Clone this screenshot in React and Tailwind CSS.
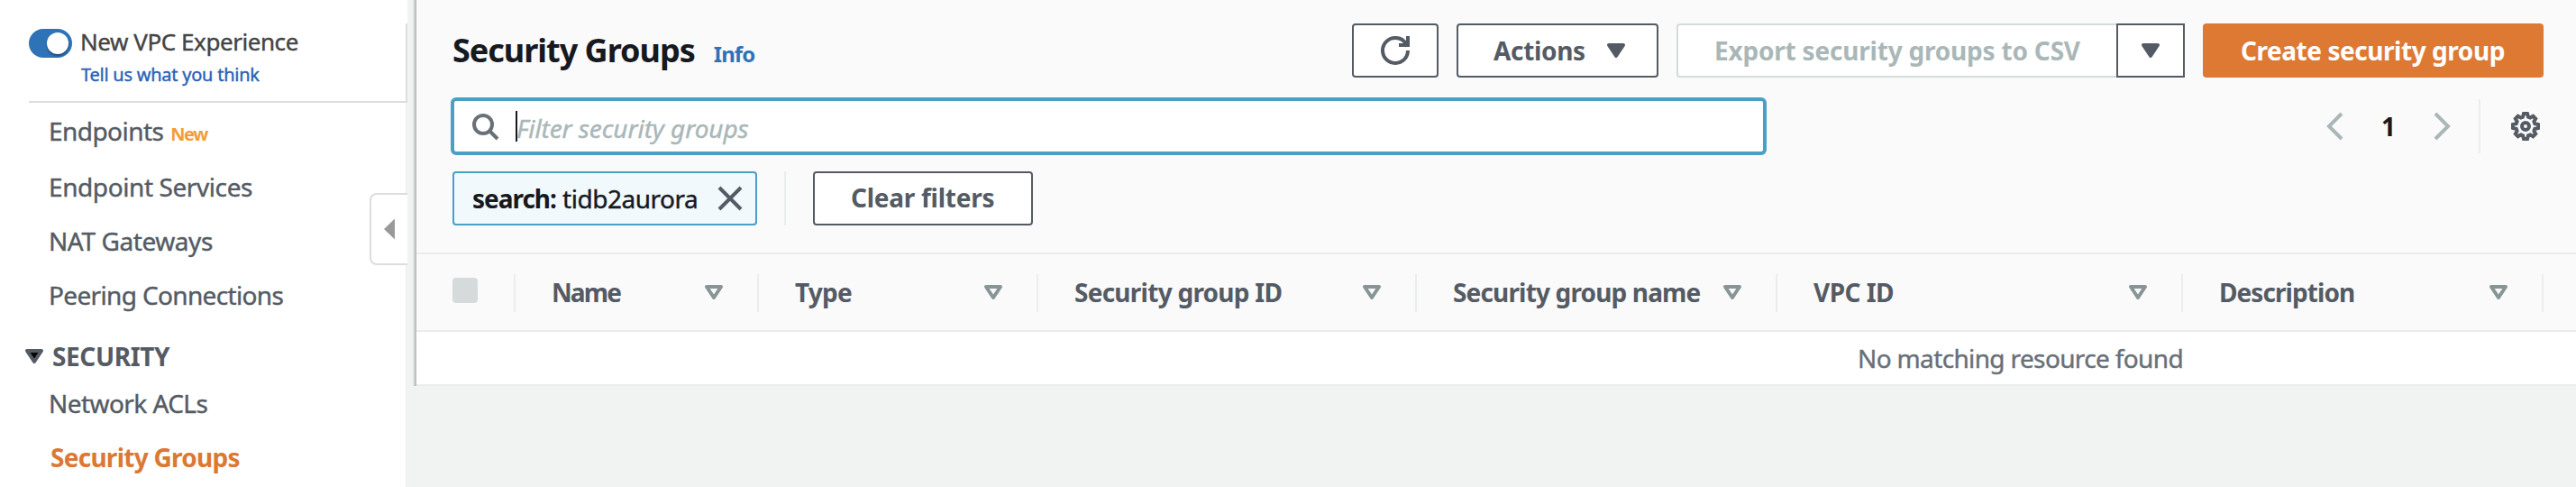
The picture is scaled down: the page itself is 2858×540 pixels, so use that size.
import React from "react";

function Icon({ children, className = "" }) {
  return (
    <svg viewBox="0 0 16 16" width="32" height="32" fill="none" stroke="currentColor" strokeWidth="2" className={"block shrink-0 " + className}>
      {children}
    </svg>
  );
}

function Caret({ className = "", fill = "currentColor" }) {
  return (
    <Icon className={className}>
      <path d="M4 5h8l-4 6-4-6z" fill={fill} strokeLinejoin="round" />
    </Icon>
  );
}

const navItems = [
  { label: "Endpoint Services", spacing: "tracking-[-0.41px]" },
  { label: "NAT Gateways", spacing: "tracking-[-0.41px]" },
  { label: "Peering Connections", spacing: "tracking-[-0.65px]" },
];

const columns = [
  { label: "Name", width: "w-[270px]", spacing: "tracking-[-1.9px]" },
  { label: "Type", width: "w-[310px]", spacing: "tracking-[-0.76px]" },
  { label: "Security group ID", width: "w-[420px]", spacing: "tracking-[-0.74px]" },
  { label: "Security group name", width: "w-[400px]", spacing: "tracking-[-0.84px]" },
  { label: "VPC ID", width: "w-[450px]", spacing: "tracking-[-0.55px]" },
  { label: "Description", width: "w-[400px]", spacing: "tracking-[-0.93px]" },
];

function Sidebar() {
  return (
    <aside className="relative h-[540px] w-[452px] shrink-0 bg-white text-[28px] text-[#545b64]">
      <div className="flex h-[114px] flex-col">
        <div className="h-[26px] shrink-0" />
        <div className="flex h-[88px] border-r-2 border-[#dddddd]">
          <div className="ml-8 flex flex-1 gap-[9px] border-b-2 border-[#dddddd] pt-[6px]">
            <div className="flex h-8 w-12 shrink-0 items-center justify-end rounded-full bg-[#2e73b8] pr-1">
              <span className="size-6 rounded-full bg-white shadow-[0_2px_2px_rgba(0,0,0,0.35)]" />
            </div>
            <div className="flex flex-col whitespace-nowrap [-webkit-text-stroke:0.4px]">
              <span className="h-8 text-[26px] leading-[28px] tracking-[-0.44px] text-[#444444]">New VPC Experience</span>
              <span className="pl-[1px] pt-[5px] text-[20px] leading-[28px] tracking-[-0.24px] text-[#2a62b8]">Tell us what you think</span>
            </div>
          </div>
        </div>
      </div>
      <nav className="flex h-[426px] flex-col whitespace-nowrap border-r-2 border-[#f0f0f0] pl-[54px]">
        <div className="flex h-[63px] items-baseline gap-[8px] leading-[63px]">
          <span className="tracking-[-0.55px] [-webkit-text-stroke:0.4px]">Endpoints</span>
          <span className="text-[20px] font-bold tracking-[-1.5px] text-[#f29d38]">New</span>
        </div>
        {navItems.map((item) => (
          <span key={item.label} className={"h-[60px] leading-[60px] [-webkit-text-stroke:0.4px] " + item.spacing}>{item.label}</span>
        ))}
        <div className="-ml-8 mt-4 flex h-11 items-center gap-1 font-bold leading-[44px] tracking-[-0.38px]">
          <Caret fill="#000" />
          <span>SECURITY</span>
        </div>
        <span className="h-[60px] leading-[60px] tracking-[-0.56px] [-webkit-text-stroke:0.4px]">Network ACLs</span>
        <span className="h-[60px] pl-[2px] font-bold leading-[60px] tracking-[-0.73px] text-[#dc7833]">Security Groups</span>
      </nav>
      <div className="absolute right-0 top-[214px] flex h-[80px] w-[42px] items-center rounded-l-[8px] border-2 border-r-0 border-[#dddddd] bg-white pl-[14px]">
        <svg width="12" height="24" viewBox="0 0 12 24" className="block">
          <path d="M12 0.5v23L0 12z" fill="#999999" />
        </svg>
      </div>
    </aside>
  );
}

function Toolbar() {
  return (
    <div className="flex h-[60px] items-center justify-between">
      <div className="flex items-baseline gap-[21px] whitespace-nowrap pt-[3px]">
        <h1 className="text-[36px] font-bold leading-[60px] tracking-[-1.01px]">Security Groups</h1>
        <a className="text-[24px] font-bold leading-[60px] tracking-[-0.9px] text-[#2e73b8]">Info</a>
      </div>
      <div className="flex gap-5 whitespace-nowrap text-[28px] font-bold text-[#545b64]">
        <button className="flex h-[60px] w-24 items-center justify-center rounded-[4px] border-2 border-[#545b64] bg-white">
          <Icon>
            <path d="M10 5h5V0" />
            <path d="M15 8a6.957 6.957 0 0 1-7 7 6.957 6.957 0 0 1-7-7 6.957 6.957 0 0 1 7-7 6.87 6.87 0 0 1 6.3 4" />
          </Icon>
        </button>
        <button className="flex h-[60px] w-56 items-center gap-[18px] rounded-[4px] border-2 border-[#545b64] bg-white pl-[39px]">
          <span className="leading-[54px] tracking-[-0.34px]">Actions</span>
          <Caret />
        </button>
        <div className="flex">
          <button className="flex h-[60px] w-[488px] items-center rounded-l-[4px] border-2 border-r-0 border-[#d5dbdb] bg-white pl-[40px] text-[#aab7b8]">
            <span className="leading-[54px] tracking-[-0.2px]">Export security groups to CSV</span>
          </button>
          <button className="flex h-[60px] w-[76px] items-center justify-center border-2 border-[#545b64] bg-white">
            <Caret />
          </button>
        </div>
        <button className="flex h-[60px] w-[378px] items-center rounded-[4px] bg-[#dd7933] pl-[42px] text-white">
          <span className="leading-[58px] tracking-[-0.45px]">Create security group</span>
        </button>
      </div>
    </div>
  );
}

function FilterRow() {
  return (
    <div className="mt-[22px] flex h-16 items-center justify-between">
      <div className="-ml-[2px] flex h-16 w-[1460px] items-center rounded-[6px] border-4 border-[#4a9fc7] bg-white pl-[18px]">
        <Icon className="text-[#687078]">
          <circle cx="7" cy="7" r="5" />
          <path d="m15 15-4.5-4.5" />
        </Icon>
        <span className="ml-[18px] h-[34px] w-[2px] bg-[#16191f]" />
        <span className="-ml-[1px] pt-[3px] text-[28px] italic leading-[54px] tracking-[-0.09px] text-[#aab7b8] [-webkit-text-stroke:0.4px]">Filter security groups</span>
      </div>
      <div className="flex items-center">
        <Icon className="text-[#aab7b8]"><path d="M11 1 4 8l7 7" /></Icon>
        <span className="w-[84px] pb-[1px] text-center text-[28px] font-bold leading-[54px]">1</span>
        <Icon className="text-[#aab7b8]"><path d="m5 1 7 7-7 7" /></Icon>
        <span className="ml-[26px] h-[60px] w-[2px] bg-[#eaeded]" />
        <Icon className="ml-[34px] mr-1 text-[#545b64]">
          <circle cx="8" cy="8" r="2" />
          <path d="M7 1h2l.5 1.9 1.1.4 1.6-.9 1.4 1.4-.9 1.6.4 1.1L15 7v2l-1.9.5-.4 1.1.9 1.6-1.4 1.4-1.6-.9-1.1.4L9 15H7l-.5-1.9-1.1-.4-1.6.9-1.4-1.4.9-1.6-.4-1.1L1 9V7l1.9-.5.4-1.1-.9-1.6 1.4-1.4 1.6.9 1.1-.4z" />
        </Icon>
      </div>
    </div>
  );
}

function TokenRow() {
  return (
    <div className="mt-[18px] flex h-[60px] items-center whitespace-nowrap text-[28px]">
      <div className="flex h-[60px] w-[338px] items-center rounded-[4px] border-2 border-[#4a9fc7] bg-[#f2f9fd] pl-[20px]">
        <span className="w-[100px] pb-[1px] font-bold leading-[54px] tracking-[-1.02px]">search:</span>
        <span className="w-[170px] pb-[1px] leading-[54px] tracking-[-0.47px] [-webkit-text-stroke:0.4px]">tidb2aurora</span>
        <Icon className="text-[#545b64]"><path d="m2 2 12 12M14 2 2 14" /></Icon>
      </div>
      <span className="ml-[30px] h-[60px] w-[2px] bg-[#eaeded]" />
      <button className="ml-[30px] h-[60px] w-[244px] rounded-[4px] border-2 border-[#545b64] bg-white pb-[1px] pl-[40px] text-left font-bold leading-[55px] tracking-[-0.26px] text-[#545b64]">
        Clear filters
      </button>
    </div>
  );
}

function Table() {
  return (
    <div className="whitespace-nowrap text-[28px]">
      <div className="flex h-[88px] items-center border-y-2 border-[#eaeded] font-bold text-[#545b64]">
        <div className="flex w-[110px] items-center justify-between pl-10">
          <span className="mb-1 size-7 rounded-[4px] bg-[#d5dbdb]" />
          <span className="mt-[2px] h-[42px] w-[2px] bg-[#eaeded]" />
        </div>
        {columns.map((c) => (
          <div key={c.label} className={"flex shrink-0 items-center pl-10 " + c.width}>
            <span className={"flex-1 pb-[1px] leading-[54px] " + c.spacing}>{c.label}</span>
            <Caret fill="none" className="mr-8 text-[#879596]" />
            <span className="mt-[2px] h-[42px] w-[2px] bg-[#eaeded]" />
          </div>
        ))}
      </div>
      <div className="h-[60px] border-b-2 border-[#eaeded] bg-white pl-[1599px] leading-[58px] tracking-[-0.64px] text-[#687078] [-webkit-text-stroke:0.4px]">
        No matching resource found
      </div>
    </div>
  );
}

export default function App() {
  return (
    <div className="flex h-[540px] w-full overflow-hidden bg-[#f1f3f3] font-['Noto_Sans',sans-serif] text-[#16191f]">
      <Sidebar />
      <div className="ml-[6px] h-[428px] w-1 shrink-0 bg-linear-to-r from-[#edefef] to-[#acb0b0]" />
      <main className="h-[428px] min-w-0 flex-1 bg-[#fafafa]">
        <div className="h-[280px] pl-10 pr-9 pt-[26px]">
          <Toolbar />
          <FilterRow />
          <TokenRow />
        </div>
        <Table />
      </main>
    </div>
  );
}
